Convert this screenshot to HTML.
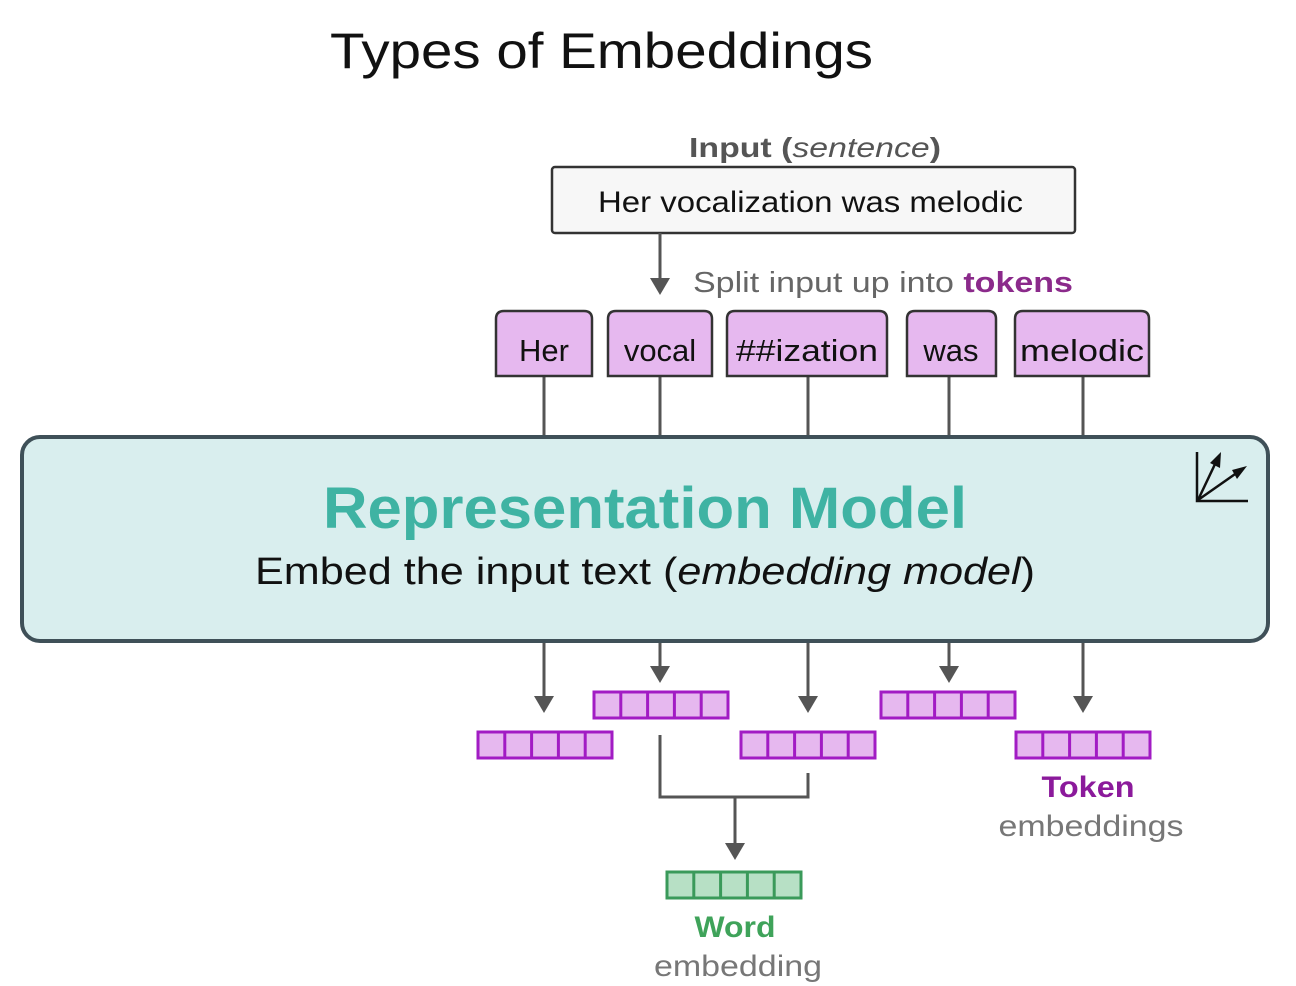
<!DOCTYPE html>
<html><head><style>body{margin:0;background:#fff}svg{display:block}</style></head><body>
<svg width="1296" height="986" viewBox="0 0 1296 986" xmlns="http://www.w3.org/2000/svg" font-family="Liberation Sans, sans-serif">
<defs>
<g id="vec"><rect x="0" y="0" width="134" height="26" fill="#e6b8ef" stroke="#a21cc4" stroke-width="3"/>
<path d="M26.8 0V26M53.6 0V26M80.4 0V26M107.2 0V26" stroke="#a21cc4" stroke-width="3"/></g>
</defs>
<text x="330" y="68" font-size="50" fill="#111" textLength="543" lengthAdjust="spacingAndGlyphs">Types of Embeddings</text>
<text x="689" y="157" font-size="28" fill="#555" textLength="252" lengthAdjust="spacingAndGlyphs"><tspan font-weight="bold">Input (</tspan><tspan font-style="italic">sentence</tspan><tspan font-weight="bold">)</tspan></text>
<rect x="552" y="167" width="523" height="66" rx="3" fill="#f7f7f7" stroke="#333" stroke-width="2.5"/>
<text x="598" y="212" font-size="30" fill="#111" textLength="425" lengthAdjust="spacingAndGlyphs">Her vocalization was melodic</text>
<g stroke="#555" stroke-width="3" fill="none">
<path d="M660 233V280"/>
<path d="M544 376V436M660 376V436M808 376V436M949 376V436M1083 376V436"/>
<path d="M544 642V698M660 642V668M808 642V698M949 642V668M1083 642V698"/>
<path d="M660 735V797H808V773M735 797V845"/>
</g>
<g fill="#555">
<path d="M650 278h20l-10 17z"/>
<path d="M534 696h20l-10 17z"/><path d="M650 666h20l-10 17z"/><path d="M798 696h20l-10 17z"/><path d="M939 666h20l-10 17z"/><path d="M1073 696h20l-10 17z"/>
<path d="M725 843h20l-10 17z"/>
</g>
<text x="693" y="292" font-size="29" fill="#666" textLength="380" lengthAdjust="spacingAndGlyphs">Split input up into <tspan font-weight="bold" fill="#8b2a8b">tokens</tspan></text>
<g fill="#e6b8ef" stroke="#333" stroke-width="2.5">
<path d="M496 376V319q0-8 8-8h80q8 0 8 8V376z"/>
<path d="M608 376V319q0-8 8-8h88q8 0 8 8V376z"/>
<path d="M727 376V319q0-8 8-8h144q8 0 8 8V376z"/>
<path d="M907 376V319q0-8 8-8h73q8 0 8 8V376z"/>
<path d="M1015 376V319q0-8 8-8h118q8 0 8 8V376z"/>
</g>
<g font-size="31" text-anchor="middle" fill="#111">
<text x="544" y="361">Her</text><text x="660" y="361">vocal</text><text x="807" y="361" textLength="142" lengthAdjust="spacingAndGlyphs">##ization</text><text x="951" y="361">was</text><text x="1082" y="361" textLength="124" lengthAdjust="spacingAndGlyphs">melodic</text>
</g>
<rect x="22" y="437" width="1246" height="204" rx="18" fill="#d9eeee" stroke="#3f5058" stroke-width="4"/>
<text x="323" y="528" font-size="58" font-weight="bold" fill="#3fb3a3" textLength="644" lengthAdjust="spacingAndGlyphs">Representation Model</text>
<text x="255" y="584" font-size="38" fill="#111" textLength="780" lengthAdjust="spacingAndGlyphs">Embed the input text (<tspan font-style="italic">embedding model</tspan>)</text>
<g stroke="#111" stroke-width="2.5" fill="none"><path d="M1197 452V501H1248"/><path d="M1198 500L1216 462M1198 500L1238 472"/></g>
<g fill="#111"><path d="M1221 452l-1 16-10-5z"/><path d="M1247 466l-10 13-5-9z"/></g>
<use href="#vec" x="594" y="692"/><use href="#vec" x="881" y="692"/>
<use href="#vec" x="478" y="732"/><use href="#vec" x="741" y="732"/><use href="#vec" x="1016" y="732"/>
<rect x="667" y="872" width="134" height="26" fill="#b7e0c5" stroke="#3a9a5a" stroke-width="3"/>
<path d="M693.8 872V898M720.6 872V898M747.4 872V898M774.2 872V898" stroke="#3a9a5a" stroke-width="3"/>
<text x="1088" y="797" font-size="30" font-weight="bold" text-anchor="middle" fill="#8b1a9b" textLength="93" lengthAdjust="spacingAndGlyphs">Token</text>
<text x="1091" y="836" font-size="30" text-anchor="middle" fill="#777" textLength="185" lengthAdjust="spacingAndGlyphs">embeddings</text>
<text x="735" y="937" font-size="30" font-weight="bold" text-anchor="middle" fill="#3fa35a" textLength="81" lengthAdjust="spacingAndGlyphs">Word</text>
<text x="738" y="976" font-size="30" text-anchor="middle" fill="#777" textLength="168" lengthAdjust="spacingAndGlyphs">embedding</text>
</svg>
</body></html>
